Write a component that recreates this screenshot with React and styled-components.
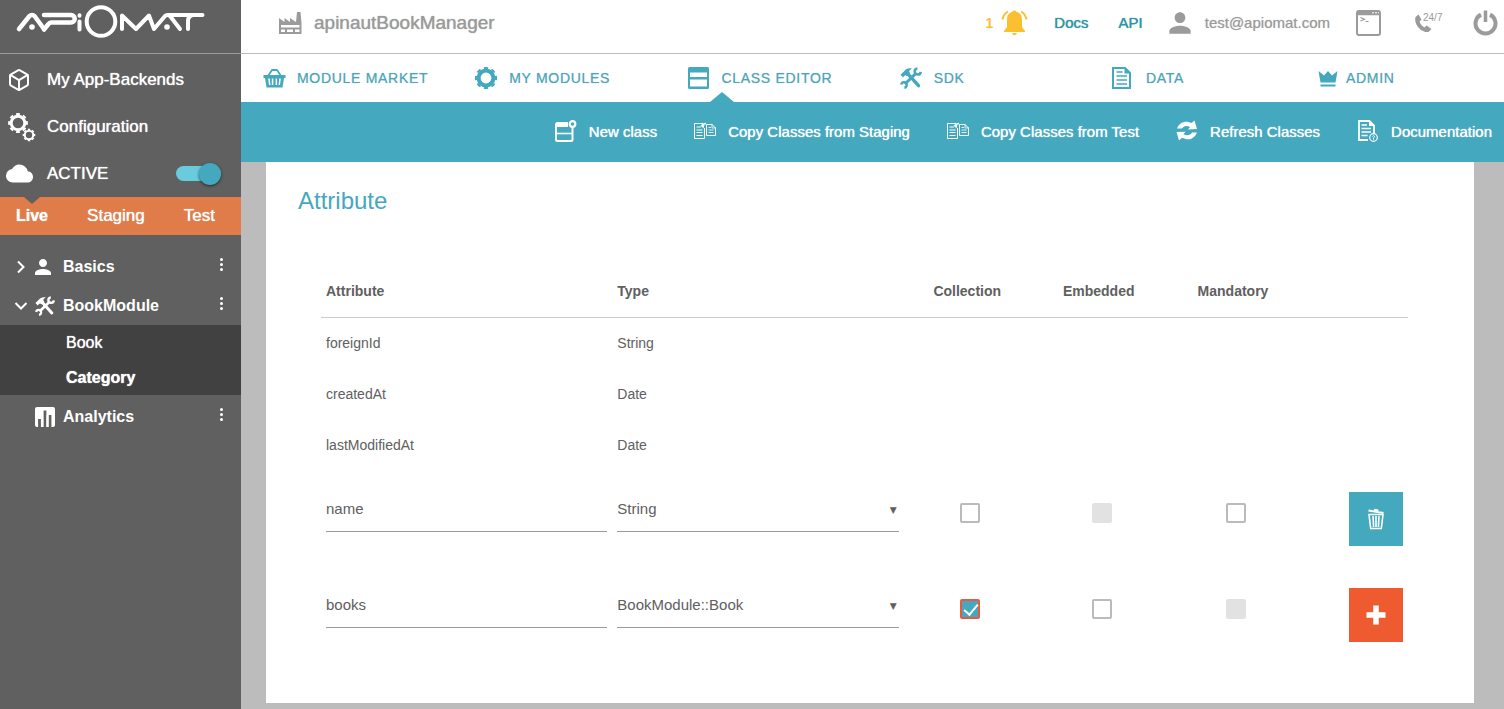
import React, { useState } from "react"
import styled, { createGlobalStyle, css, ThemeProvider } from "styled-components"
import { MdPerson, MdCloud } from "react-icons/md"
import { FiBox } from "react-icons/fi"

const theme = {
  teal: "#44a8bf",
  tealDark: "#2f93a5",
  tealLight: "#69cbde",
  orange: "#df7c49",
  orangeButton: "#ee5b30",
  yellow: "#fbbf2f",
  sidebar: "#606060",
  sidebarDark: "#414141",
  text: "#606060",
  muted: "#9b9b9b",
  border: "#bbbbbb",
  workspace: "#bcbcbc",
  disabled: "#e2e2e2",
}

const GlobalStyle = createGlobalStyle`
  * {
    box-sizing: border-box;
  }

  body {
    margin: 0;
    font-family: "Liberation Sans", Arial, Helvetica, sans-serif;
    font-size: 15px;
    color: ${theme.text};
    background: ${theme.workspace};
  }

  button, input, select {
    font: inherit;
    color: inherit;
  }

  a {
    color: inherit;
    text-decoration: none;
  }
`

/* ---------- icons ---------- */

const Logo = () => (
  <svg width="190" height="34" viewBox="15 4 190 34" fill="none" stroke="currentColor" strokeWidth="4.500" strokeLinecap="round" strokeLinejoin="round" role="img" aria-label="ApiOmat">
    <path d="M19 29L29.500 16Q30.500 15 32 15T34.500 16L44 29" />
    <circle cx="32" cy="27" r="2.800" fill="currentColor" stroke="none" />
    <path d="M44 15H71A3.700 3.700 0 0 1 71 22.500H51Q49.500 22.500 48.500 24L44 29.500" />
    <path d="M79.500 21.500V29.500M79.500 15.200V15.800" strokeWidth="4" />
    <circle cx="101" cy="21.500" r="14.300" strokeWidth="4" />
    <path d="M122 29V15.500L136 29L149 15.500L154 29L165 16Q166 15 167.500 15T170 16L180 29" strokeWidth="4" />
    <circle cx="167" cy="27" r="2.800" fill="currentColor" stroke="none" />
    <path d="M169 15H202.500M193 15Q188 16 188 21V29" strokeWidth="4" />
  </svg>
)

const Gear = ({ cx, cy, r, teeth = 8, ring, tooth }) => (
  <g fill="none" stroke="currentColor">
    <circle cx={cx} cy={cy} r={r} strokeWidth={ring} />
    <circle cx={cx} cy={cy} r={r + ring / 2 + tooth / 2 - 0.3} strokeWidth={tooth} pathLength={teeth * 2} strokeDasharray="1.1 0.9" strokeDashoffset="0.55" />
  </g>
)

const GearsIcon = () => (
  <svg width="28" height="30" viewBox="0 0 28 30">
    <Gear cx={10} cy={11} r={6.8} ring={3} tooth={1.9} />
    <Gear cx={21} cy={23} r={4.2} ring={2} tooth={1.4} />
  </svg>
)

const GearIcon = () => (
  <svg width="24" height="24" viewBox="1 0 24 24">
    <Gear cx={12} cy={12} r={7.4} ring={4} tooth={2} />
  </svg>
)

const ToolsIcon = ({ size = 24 }) => (
  <svg width={size} height={size} viewBox="0 0 24 24" fill="none" stroke="currentColor">
    <path d="M0.500 8.500L4.500 4.600C6.500 2 9.500 0.800 13 1.800C10.800 2.800 10 4 10 5.200L11 6.800L7.600 10L6.200 9C5.200 9.200 4.400 10 3.400 11.400Z" fill="currentColor" stroke="none" />
    <path d="M8.600 7.600L20.200 20.400" strokeWidth="3.600" strokeLinecap="round" />
    <path d="M5.400 18.600L18 6.400" strokeWidth="3.200" />
    <path d="M19 1.600A3.300 3.300 0 1 0 22.600 5.200" strokeWidth="2.800" />
    <path d="M1.400 19.200A3 3 0 1 1 4.800 22.600" strokeWidth="2.600" />
  </svg>
)

const AnalyticsIcon = () => (
  <svg width="20" height="22" viewBox="0 0 20 22">
    <rect x="0" y="1" width="20" height="20" rx="2" fill="currentColor" />
    <path d="M4.500 21V13M10 21V4.500M15 21V9" stroke={theme.sidebar} strokeWidth="2.800" />
    <path d="M7.200 21V13M12.500 21V9" stroke="currentColor" strokeWidth="2" />
  </svg>
)

const FactoryIcon = () => (
  <svg width="23" height="23" viewBox="0 0 23 23" fill="currentColor">
    <path fillRule="evenodd" d="M0 7L5.500 11V7L11 11V7L17 11L18 1H21.500L22.500 12V23H0ZM2 14V16.500H20.500V14ZM2 18.500V21H6V18.500ZM8 18.500V21H14V18.500ZM16 18.500V21H20.500V18.500Z" />
  </svg>
)

const BasketIcon = () => (
  <svg width="24" height="24" viewBox="0 0 24 24">
    <path d="M5 10L9 4H14L18 10" fill="none" stroke="currentColor" strokeWidth="1.800" strokeLinejoin="round" />
    <path fillRule="evenodd" d="M0.500 9H22.500V12H21L19.500 21.500H3.500L2 12H0.500ZM5.200 12.500L6 19H7.400L6.800 12.500ZM8.800 12.500V19H10.300V12.500ZM12.600 12.500V19H14.100V12.500ZM16.200 12.500L15.600 19H17L17.800 12.500Z" fill="currentColor" />
  </svg>
)

const ClassIcon = () => (
  <svg width="24" height="24" viewBox="2 0 24 24">
    <path fillRule="evenodd" d="M2.500 1H20.500Q22 1 22 2.500V21.500Q22 23 20.500 23H2.500Q1 23 1 21.500V2.500Q1 1 2.500 1ZM3 6.500V11H20V6.500ZM3 13.500V20.500H20V13.500Z" fill="currentColor" transform="translate(1 0)" />
  </svg>
)

const DataIcon = () => (
  <svg width="20" height="24" viewBox="0 0 20 24" fill="none" stroke="currentColor">
    <path d="M1 2H13L18 7V22H1Z" strokeWidth="2" />
    <path d="M12.500 1L19 7.500H12.500Z" fill="currentColor" stroke="none" />
    <path d="M4.500 6H10.500M4.500 10H15M4.500 14H15M4.500 18H15" strokeWidth="1.600" />
  </svg>
)

const CrownIcon = () => (
  <svg width="20" height="20" viewBox="0 0 20 20" fill="currentColor">
    <path d="M0.500 3L6 7.500L10 3L14 7.500L19.500 3L17.500 14.500H2.500Z" />
    <rect x="2.500" y="16.500" width="15" height="2" />
  </svg>
)

const NewClassIcon = () => (
  <svg width="22" height="22" viewBox="0 0 22 22" fill="none" stroke="currentColor">
    <path d="M13 3H2.500Q1 3 1 4.500V19.500Q1 21 2.500 21H16Q17.500 21 17.500 19.500V8" strokeWidth="2" />
    <path d="M1 5H13" strokeWidth="4" />
    <path d="M1 13.500H17" strokeWidth="1.600" />
    <circle cx="17.500" cy="4" r="2.800" strokeWidth="2.200" />
  </svg>
)

const CopyIcon = () => (
  <svg width="22" height="18" viewBox="0 0 22 18" fill="none" stroke="currentColor">
    <path d="M9 1.500H0.500V16.500H10.500V6" />
    <path d="M2.500 5H7M2.500 8H8.500M2.500 10.500H8.500M2.500 13.500H8.500" />
    <path d="M12.500 2.500H18L21.500 6V13.500H12.500Z" />
    <path d="M18 2V6H22M14.500 5.500H17M14.500 8H19.500M14.500 10.500H19.500" strokeWidth="0.800" />
    <path d="M8 4.500Q8.500 1.500 12 1.500" strokeWidth="1.400" />
    <path d="M6.500 3L9.500 6.500L10.500 2.500Z" fill="currentColor" stroke="none" />
  </svg>
)

const RefreshIcon = () => (
  <svg width="22" height="22" viewBox="0 0 22 22" fill="currentColor">
    <path d="M1 8.500C3 3.500 7 1.200 11.500 1.800L15.500 3L18.500 0.500L21 9L12 9.500L14 7C10.500 5.200 7.500 6 6 8.500Z" />
    <path d="M21 12.500C19 17.500 15 20 10.500 19.200L6 17.800L3 20.500L0.500 12L9.500 11.700L7.500 14.200C11 16 14.500 15.200 16 12.500Z" />
  </svg>
)

const DocumentationIcon = () => (
  <svg width="22" height="24" viewBox="0 0 22 24" fill="none" stroke="currentColor">
    <path d="M11 21H2V2H12.500L17 6.500V14" strokeWidth="1.800" />
    <path d="M12 1L18 7H12Z" fill="currentColor" stroke="none" />
    <path d="M4.500 6H10M4.500 9.500H14M4.500 13H14M4.500 16.500H10.500" strokeWidth="1.400" />
    <circle cx="16.500" cy="18.500" r="3.800" strokeWidth="1.200" />
    <path d="M15.300 17.500Q16.500 15.800 17.500 17.300Q17.300 18.300 16.500 19V20.800" strokeWidth="0.900" />
  </svg>
)

const BellIcon = () => (
  <svg width="27" height="27" viewBox="0 0 27 27">
    <path d="M13.500 1.500C14.500 1.500 15 2 15.200 2.800C19 3.500 21 6.500 21 10.500V18L24 22V23H3V22L6 18V10.500C6 6.500 8 3.500 11.800 2.800C12 2 12.500 1.500 13.500 1.500ZM11 24H16Q15 26.300 13.500 26.300T11 24Z" fill="currentColor" />
    <path d="M7 2.500Q2.500 5 1.500 10.500M20 2.500Q24.500 5 25.500 10.500" fill="none" stroke="currentColor" strokeWidth="2" />
  </svg>
)

const TerminalIcon = () => (
  <svg width="25" height="26" viewBox="0 0 25 26" fill="none" stroke="currentColor">
    <rect x="1" y="1" width="23" height="24" rx="2" strokeWidth="2" />
    <path d="M1 3.500H24" strokeWidth="3.500" />
    <path d="M16 2.800H18M19 2.800H21M22 2.800H23" stroke="#fff" />
    <path d="M4.500 7.500L8.500 9.300L4.500 11M9.500 11.500H12.500" strokeWidth="1.200" />
  </svg>
)

const PhoneIcon = () => (
  <svg width="18" height="20" viewBox="0 0 18 20" fill="currentColor">
    <path d="M1.500 4L4.500 1.500L7.500 6.500L5.500 8.500C6.500 11.500 8 13 10.500 14.500L12.500 12.500L17.500 16L14.500 19C8 20 -0.500 12 1.500 4Z" />
  </svg>
)

const PowerIcon = () => (
  <svg width="25" height="26" viewBox="0 0 25 26" fill="none" stroke="currentColor" strokeWidth="4">
    <path d="M8 4.600A10 10 0 1 0 17 4.600" />
    <path d="M12.500 0.500V12" strokeWidth="3.500" />
  </svg>
)

const TrashIcon = () => (
  <svg width="18" height="22" viewBox="0 0 18 22" fill="none" stroke="currentColor">
    <path d="M2 6.500H16L14.300 20.500H3.700Z" strokeWidth="1.600" />
    <path d="M6 8L6.600 19M9 8V19M12 8L11.400 19" strokeWidth="1.600" />
    <path d="M1.500 2.500L16.500 5M7.500 2.600L8 1.800L10.500 2.200V3.400" strokeWidth="1.800" />
  </svg>
)

const PlusIcon = () => (
  <svg width="20" height="20" viewBox="0 0 20 20" stroke="currentColor" strokeWidth="5.500">
    <path d="M10 0.500V19.500M0.500 10H19.500" />
  </svg>
)

const Chevron = ({ open }) => (
  <svg width="14" height="14" viewBox="0 0 14 14" fill="none" stroke="currentColor" strokeWidth="2">
    <path d={open ? "M1.500 4L7 9.500L12.500 4" : "M4 1.500L9.500 7L4 12.500"} />
  </svg>
)

/* ---------- layout ---------- */

const Shell = styled.div`
  display: flex;
  min-height: 100vh;
`

const Sidebar = styled.aside`
  flex: 0 0 241px;
  background: ${props => props.theme.sidebar};
  color: #fff;
  font-size: 16px;
`

const Brand = styled.a`
  display: flex;
  height: 54px;
  padding: 4px 15px 0;
  border-bottom: 1px solid ${props => props.theme.muted};
`

const Main = styled.div`
  flex: 1;
  min-width: 0;
  display: flex;
  flex-direction: column;
`

/* ---------- sidebar ---------- */

const sidebarItem = css`
  display: flex;
  align-items: center;
  height: 47px;
  padding-left: 6px;
  font-size: 17px;
  text-shadow: 0 0 1px #fff;

  > svg {
    flex: none;
  }
`

const SideNav = styled.nav`
  padding-top: 2px;
`

const SideLink = styled.a`
  ${sidebarItem}
`

const SideToggle = styled.label`
  ${sidebarItem}
  padding-right: 20px;
  cursor: pointer;
`

const IconSlot = styled.span`
  display: flex;
  flex: 0 0 41px;
  padding-left: ${props => props.$inset || 0}px;
`

const Switch = styled.input`
  appearance: none;
  display: flex;
  align-items: center;
  width: 45px;
  height: 15px;
  margin: 0 0 0 auto;
  border-radius: 8px;
  background: ${props => props.theme.tealLight};
  cursor: pointer;

  &::before {
    content: "";
    width: 22px;
    height: 22px;
    border-radius: 50%;
    background: ${props => props.theme.teal};
    box-shadow: 0 1px 3px rgba(0, 0, 0, 0.6);
  }

  &:checked::before {
    margin-left: auto;
  }
`

const Stages = styled.div`
  display: flex;
  justify-content: space-between;
  height: 38px;
  padding: 0 26px 0 16px;
  background: ${props => props.theme.orange};
`

const StageButton = styled.button`
  position: relative;
  padding: 0;
  border: 0;
  background: none;
  font-size: ${props => (props.$active ? 16 : 17)}px;
  font-weight: ${props => (props.$active ? "bold" : "normal")};
  text-shadow: 0 0 1px #fff;
  cursor: pointer;

  ${props =>
    props.$active &&
    css`
      &::before {
        content: "";
        position: absolute;
        top: 0;
        left: 50%;
        margin-left: -8px;
        border: 8px solid transparent;
        border-top: 7px solid ${props.theme.sidebar};
        border-bottom: 0;
      }
    `}
`

const Tree = styled.nav`
  padding-top: 12px;
`

const TreeRow = styled.div`
  display: flex;
  align-items: center;
  height: 39px;
  padding: 0 14px;
  font-weight: bold;
  text-shadow: 0 0 1px #fff;
`

const TreeToggle = styled.button`
  display: flex;
  align-items: center;
  flex: 1;
  padding: 0;
  border: 0;
  background: none;
  text-align: left;
  cursor: pointer;
`

const TreeArrow = styled.span`
  display: flex;
  flex: 0 0 21px;
`

const TreeIcon = styled.span`
  display: flex;
  flex: 0 0 28px;
`

const PersonIcon = styled(MdPerson)`
  flex: none;
  margin-left: ${props => (props.size > 24 ? -5 : -4)}px;
`

const KebabButton = styled.button`
  display: flex;
  flex-direction: column;
  align-items: center;
  gap: 2px;
  width: 12px;
  padding: 0 0 4px;
  border: 0;
  background: none;
  cursor: pointer;

  > i {
    width: 3px;
    height: 3px;
    border-radius: 50%;
    background: #fff;
  }
`

const SubTree = styled.div`
  margin-bottom: 2px;
  background: ${props => props.theme.sidebarDark};
  text-shadow: 0 0 1px #fff;
`

const SubLink = styled.a`
  display: block;
  padding-left: 66px;
  line-height: 35px;
  font-weight: ${props => (props.$active ? "bold" : "normal")};
`

/* ---------- header ---------- */

const Header = styled.header`
  display: flex;
  align-items: center;
  justify-content: space-between;
  height: 54px;
  padding: 0 6px 8px 38px;
  border-bottom: 1px solid ${props => props.theme.border};
  background: #fff;
  color: ${props => props.theme.muted};
`

const AppName = styled.div`
  display: flex;
  align-items: center;
  gap: 12px;
  font-size: 19px;
  text-shadow: 0 0 1px ${props => props.theme.muted};
`

const HeaderGroup = styled.div`
  display: flex;
  align-items: center;
  gap: ${props => props.$gap}px;
`

const HeaderLink = styled.a`
  color: ${props => props.theme.tealDark};
  text-shadow: 0 0 1px ${props => props.theme.tealDark};
`

const Notifications = styled.button`
  display: flex;
  align-items: center;
  gap: 8px;
  padding: 0;
  border: 0;
  background: none;
  color: ${props => props.theme.yellow};
  font-size: 14px;
  font-weight: bold;
  cursor: pointer;
`

const UserLink = styled.a`
  display: flex;
  align-items: center;
  gap: 9px;
  text-shadow: 0 0 1px ${props => props.theme.border};
`

const IconButton = styled.button`
  display: flex;
  align-items: center;
  padding: 0;
  border: 0;
  background: none;
  cursor: pointer;
`

const HotlineButton = styled(IconButton)`
  align-items: flex-start;
  width: 26px;

  > svg {
    flex: none;
    margin-right: -9px;
  }

  > span {
    font-family: "Liberation Sans Narrow", "Liberation Sans", sans-serif;
    font-size: 10px;
    line-height: 10px;
  }
`

/* ---------- tabs and actions ---------- */

const Tabs = styled.nav`
  display: grid;
  grid-template-columns: repeat(4, 1fr) 206px 186px;
  height: 48px;
  padding-left: 22px;
  background: #fff;
`

const Tab = styled.a`
  position: relative;
  display: flex;
  align-items: center;
  gap: ${props => (props.$compact ? 8 : 10)}px;
  color: ${props => props.theme.teal};
  font-size: 14px;
  letter-spacing: 0.05em;
  text-shadow: 0 0 1px ${props => props.theme.border};
  white-space: nowrap;

  > span {
    display: flex;
    width: ${props => (props.$compact ? 20 : 24)}px;
  }

  ${props =>
    props.$active &&
    css`
      &::after {
        content: "";
        position: absolute;
        bottom: 0;
        left: 22px;
        border: 12px solid transparent;
        border-bottom: 10px solid ${props.theme.teal};
        border-top: 0;
      }
    `}
`

const Actions = styled.div`
  display: flex;
  justify-content: flex-end;
  gap: 37px;
  height: 60px;
  padding-right: 12px;
  background: ${props => props.theme.teal};
  color: #fff;
`

const ActionButton = styled.button`
  display: flex;
  align-items: center;
  gap: 12px;
  padding: 0 0 2px;
  border: 0;
  background: none;
  text-shadow: 0 0 1px #fff;
  white-space: nowrap;
  cursor: pointer;
`

/* ---------- attribute table ---------- */

const Workspace = styled.main`
  flex: 1;
  display: flex;
  padding: 0 30px 6px 25px;
  background: ${props => props.theme.workspace};
`

const Card = styled.section`
  flex: 1;
  padding: 24px 66px 40px 55px;
  background: #fff;
`

const CardTitle = styled.h1`
  margin: 0 0 49px -23px;
  color: ${props => props.theme.teal};
  font-size: 24px;
  font-weight: normal;
  line-height: 30px;
`

const Table = styled.table`
  width: 100%;
  table-layout: fixed;
  border-collapse: separate;
  border-spacing: 0;
  font-size: 14px;
  text-align: left;
`

const Column = styled.col`
  width: ${props => props.$width};
`

const HeadCell = styled.th`
  height: 53px;
  padding: 0 5px;
  border-bottom: 1px solid #cccccc;
  text-align: ${props => (props.$center ? "center" : "left")};
`

const Cell = styled.td`
  height: 51px;
  padding: 0 5px 2px;
`

const FieldCell = styled(Cell)`
  height: 96px;
  padding-bottom: 20px;
`

const CheckCell = styled(Cell)`
  padding: 0 0 12px 6px;
  text-align: center;
`

const ButtonCell = styled(Cell)`
  padding-bottom: 0;

  > button {
    margin-left: auto;
  }
`

const field = css`
  display: block;
  width: 100%;
  height: 46px;
  padding: 0;
  border: 0;
  border-bottom: 1px solid ${props => props.theme.muted};
  border-radius: 0;
  outline: 0;
  background: none;
  font-size: 15px;
`

const TextField = styled.input`
  ${field}
`

const SelectField = styled.select`
  ${field}
  appearance: none;
`

const SelectWrap = styled.div`
  position: relative;

  &::after {
    content: "▼";
    position: absolute;
    top: 19px;
    right: 2px;
    font-family: "DejaVu Sans", sans-serif;
    font-size: 9px;
    line-height: 10px;
    pointer-events: none;
  }
`

const Checkbox = styled.input`
  appearance: none;
  width: 20px;
  height: 20px;
  margin: 0;
  border: 2px solid ${props => props.theme.border};
  border-radius: 2px;
  background: #fff;
  vertical-align: middle;

  &:checked {
    border-color: #e25b43;
    background: ${props => props.theme.teal};
  }

  &:checked::before {
    content: "";
    display: block;
    width: 6px;
    height: 12px;
    margin: 0 0 0 5px;
    border: solid #fff;
    border-width: 0 2px 2px 0;
    transform: rotate(40deg);
  }

  &:disabled {
    border-color: ${props => props.theme.disabled};
    background: ${props => props.theme.disabled};
  }
`

const SquareButton = styled.button`
  display: flex;
  align-items: center;
  justify-content: center;
  width: 54px;
  height: 54px;
  padding: 0;
  border: 0;
  background: ${props => (props.$add ? props.theme.orangeButton : props.theme.teal)};
  color: #fff;
  cursor: pointer;
`

const tabs = [
  { label: "MODULE MARKET", icon: <BasketIcon /> },
  { label: "MY MODULES", icon: <GearIcon /> },
  { label: "CLASS EDITOR", icon: <ClassIcon />, active: true },
  { label: "SDK", icon: <ToolsIcon size={22} /> },
  { label: "DATA", icon: <DataIcon /> },
  { label: "ADMIN", icon: <CrownIcon />, compact: true },
]

const actions = [
  { label: "New class", icon: <NewClassIcon /> },
  { label: "Copy Classes from Staging", icon: <CopyIcon /> },
  { label: "Copy Classes from Test", icon: <CopyIcon /> },
  { label: "Refresh Classes", icon: <RefreshIcon /> },
  { label: "Documentation", icon: <DocumentationIcon /> },
]

const systemAttributes = [
  { name: "foreignId", type: "String" },
  { name: "createdAt", type: "Date" },
  { name: "lastModifiedAt", type: "Date" },
]

const flags = ["Collection", "Embedded", "Mandatory"]
const types = ["String", "Date", "BookModule::Book"]

const initialAttributes = [
  { name: "name", type: "String", checked: [], disabled: ["Embedded"] },
  { name: "books", type: "BookModule::Book", checked: ["Collection"], disabled: ["Mandatory"], isNew: true },
]

const Kebab = ({ label }) => (
  <KebabButton aria-label={`${label} menu`}>
    <i />
    <i />
    <i />
  </KebabButton>
)

const TreeItem = ({ label, icon, arrow }) => (
  <TreeRow>
    <TreeToggle>
      <TreeArrow>{arrow}</TreeArrow>
      <TreeIcon>{icon}</TreeIcon>
      {label}
    </TreeToggle>
    <Kebab label={label} />
  </TreeRow>
)

const AppSidebar = () => {
  const [stage, setStage] = useState("Live")

  return (
    <Sidebar>
      <Brand href="#">
        <Logo />
      </Brand>
      <SideNav>
        <SideLink href="#backends">
          <IconSlot $inset={1}>
            <FiBox size={24} />
          </IconSlot>
          My App-Backends
        </SideLink>
        <SideLink href="#configuration">
          <IconSlot $inset={2}>
            <GearsIcon />
          </IconSlot>
          Configuration
        </SideLink>
        <SideToggle>
          <IconSlot>
            <MdCloud size={27} />
          </IconSlot>
          ACTIVE
          <Switch type="checkbox" role="switch" defaultChecked />
        </SideToggle>
      </SideNav>
      <Stages>
        {["Live", "Staging", "Test"].map(name => (
          <StageButton key={name} $active={name === stage} onClick={() => setStage(name)}>
            {name}
          </StageButton>
        ))}
      </Stages>
      <Tree>
        <TreeItem label="Basics" icon={<PersonIcon size={24} />} arrow={<Chevron />} />
        <TreeItem label="BookModule" icon={<ToolsIcon size={20} />} arrow={<Chevron open />} />
        <SubTree>
          <SubLink href="#book">Book</SubLink>
          <SubLink href="#category" $active>
            Category
          </SubLink>
        </SubTree>
        <TreeItem label="Analytics" icon={<AnalyticsIcon />} />
      </Tree>
    </Sidebar>
  )
}

const AppHeader = () => (
  <Header>
    <AppName>
      <FactoryIcon />
      apinautBookManager
    </AppName>
    <HeaderGroup $gap={26}>
      <Notifications>
        1
        <BellIcon />
      </Notifications>
      <HeaderGroup $gap={30}>
        <HeaderLink href="#docs">Docs</HeaderLink>
        <HeaderLink href="#api">API</HeaderLink>
      </HeaderGroup>
      <UserLink href="#account">
        <PersonIcon size={32} />
        test@apiomat.com
      </UserLink>
      <HeaderGroup $gap={33}>
        <IconButton aria-label="Console">
          <TerminalIcon />
        </IconButton>
        <HotlineButton aria-label="Hotline">
          <PhoneIcon />
          <span>24/7</span>
        </HotlineButton>
        <IconButton aria-label="Log out">
          <PowerIcon />
        </IconButton>
      </HeaderGroup>
    </HeaderGroup>
  </Header>
)

const AttributeRow = ({ attribute }) => (
  <tr>
    <FieldCell>
      <TextField aria-label="Attribute" defaultValue={attribute.name} />
    </FieldCell>
    <FieldCell>
      <SelectWrap>
        <SelectField aria-label="Type" defaultValue={attribute.type}>
          {types.map(type => (
            <option key={type}>{type}</option>
          ))}
        </SelectField>
      </SelectWrap>
    </FieldCell>
    {flags.map(flag => (
      <CheckCell key={flag}>
        <Checkbox
          type="checkbox"
          aria-label={flag}
          defaultChecked={attribute.checked.includes(flag)}
          disabled={attribute.disabled.includes(flag)}
        />
      </CheckCell>
    ))}
    <ButtonCell>
      <SquareButton $add={attribute.isNew} aria-label={attribute.isNew ? "Add attribute" : "Delete attribute"}>
        {attribute.isNew ? <PlusIcon /> : <TrashIcon />}
      </SquareButton>
    </ButtonCell>
  </tr>
)

const AttributeTable = () => (
  <Table>
    <colgroup>
      <Column $width="26.8%" />
      <Column $width="26.8%" />
      <Column $width="11.7%" />
      <Column $width="12.5%" />
      <Column $width="12.2%" />
      <Column />
    </colgroup>
    <thead>
      <tr>
        <HeadCell>Attribute</HeadCell>
        <HeadCell>Type</HeadCell>
        {flags.map(flag => (
          <HeadCell key={flag} $center>
            {flag}
          </HeadCell>
        ))}
        <HeadCell />
      </tr>
    </thead>
    <tbody>
      {systemAttributes.map(({ name, type }) => (
        <tr key={name}>
          <Cell>{name}</Cell>
          <Cell>{type}</Cell>
          <Cell colSpan={4} />
        </tr>
      ))}
      {initialAttributes.map(attribute => (
        <AttributeRow key={attribute.name} attribute={attribute} />
      ))}
    </tbody>
  </Table>
)

const App = () => (
  <ThemeProvider theme={theme}>
    <GlobalStyle />
    <Shell>
      <AppSidebar />
      <Main>
        <AppHeader />
        <Tabs>
          {tabs.map(({ label, icon, active, compact }) => (
            <Tab key={label} href="#" $active={active} $compact={compact}>
              <span>{icon}</span>
              {label}
            </Tab>
          ))}
        </Tabs>
        <Actions>
          {actions.map(({ label, icon }) => (
            <ActionButton key={label}>
              {icon}
              {label}
            </ActionButton>
          ))}
        </Actions>
        <Workspace>
          <Card>
            <CardTitle>Attribute</CardTitle>
            <AttributeTable />
          </Card>
        </Workspace>
      </Main>
    </Shell>
  </ThemeProvider>
)

export default App
